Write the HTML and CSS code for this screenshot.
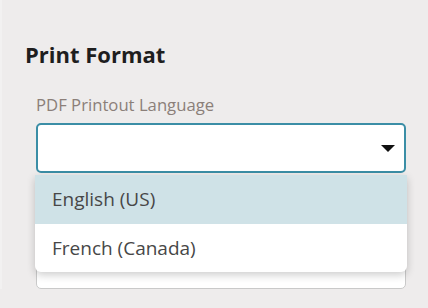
FILE: index.html
```html
<!DOCTYPE html>
<html lang="en">
<head>
  <meta charset="UTF-8">
  <title>Print Format</title>
  <link rel="stylesheet" href="styles.css">
</head>
<body>
  <div class="settings-panel">
    <h2 class="section-title">Print Format</h2>

    <div class="field">
      <label class="field-label">PDF Printout Language</label>
      <div class="select-wrap">
        <div class="select-box open">
          <span class="caret"></span>
        </div>
        <ul class="dropdown-menu">
          <li class="option highlighted">English (US)</li>
          <li class="option">French (Canada)</li>
        </ul>
      </div>
    </div>

    <!-- next field, mostly hidden under the open menu -->
    <div class="field next-field">
      <div class="select-box"></div>
    </div>
  </div>
</body>
</html>
```

FILE: styles.css
```css
body {
  margin: 0;
  padding: 0;
  background-color: #eeecec;
  font-family: "Open Sans", Arial, sans-serif;
  height: 308px;
  overflow: hidden;
}

.settings-panel {
  padding: 38px 22px 0 23px;
  border-left: 2px solid #f2f1f1;
}

.section-title {
  margin: 0 0 24px 0;
  font-size: 22px;
  font-weight: 700;
  line-height: 32px;
  color: #1e1e1e;
}

.field {
  padding-left: 11px;
}

.field-label {
  display: block;
  font-size: 16.7px;
  line-height: 22px;
  color: #8b7f79;
  margin-bottom: 7px;
}

.select-wrap {
  position: relative;
}

.select-box {
  height: 46px;
  background-color: #fff;
  border: 2px solid #3b8ea6;
  border-radius: 5px;
  position: relative;
}

.caret {
  position: absolute;
  right: 9px;
  top: 20px;
  width: 0;
  height: 0;
  border-left: 7px solid transparent;
  border-right: 7px solid transparent;
  border-top: 7px solid #111;
}

.dropdown-menu {
  position: absolute;
  top: 52px;
  left: -1px;
  right: -1px;
  margin: 0;
  padding: 0;
  list-style: none;
  background-color: #fff;
  border-radius: 0 0 6px 6px;
  box-shadow: 0 3px 8px rgba(0, 0, 0, 0.2);
  z-index: 2;
}

.option {
  height: 48.5px;
  line-height: 48px;
  padding-left: 17px;
  font-size: 19px;
  color: #474747;
}

.option.highlighted {
  background-color: #cfe2e7;
}

.next-field {
  margin-top: 77px;
}

.next-field .select-box {
  height: 37px;
  border: 1px solid #c9c9c9;
}
```
